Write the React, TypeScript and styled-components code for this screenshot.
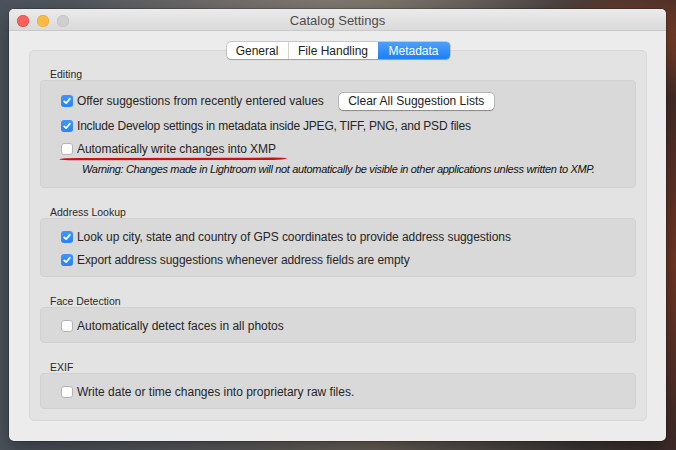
import React from "react";
import styled, { createGlobalStyle } from "styled-components";

const Global = createGlobalStyle`
  html, body { margin: 0; padding: 0; }
  body {
    width: 676px;
    height: 450px;
    overflow: hidden;
    font-family: "Liberation Sans", Arial, sans-serif;
    background:
      radial-gradient(ellipse 120px 60px at 640px 40px, rgba(150,70,40,0.85), transparent),
      radial-gradient(ellipse 60px 200px at 676px 260px, rgba(120,55,35,0.9), transparent),
      radial-gradient(ellipse 260px 40px at 330px 0px, rgba(140,130,120,0.7), transparent),
      linear-gradient(90deg, #4a525c 0%, #5a5b5e 30%, #6a625a 55%, #3f3a3a 85%, #3a2a28 100%);
  }
  #root { padding: 9px 10px 9px 9px; }
`;

const Window = styled.div`
  width: 657px;
  height: 432px;
  background: #ececec;
  border-radius: 5px;
  box-shadow: 0 0 0 0.5px rgba(0,0,0,0.35), 0 8px 20px rgba(0,0,0,0.35);
  display: flex;
  flex-direction: column;
  overflow: hidden;
`;

const TitleBar = styled.div`
  height: 19px;
  padding-top: 2px;
  flex: none;
  border-bottom: 1px solid #c9c9c9;
  background: linear-gradient(#ebebeb, #dadada);
  display: flex;
  align-items: center;
  position: relative;
  padding-left: 8px;
  gap: 8px;
`;

const Light = styled.span<{ $c: string; $b: string }>`
  width: 12px;
  height: 12px;
  border-radius: 50%;
  background: ${(p) => p.$c};
  box-shadow: inset 0 0 0 0.5px ${(p) => p.$b};
`;

const Title = styled.div`
  position: absolute;
  left: 0;
  right: 0;
  top: 2px;
  bottom: 0;
  display: flex;
  align-items: center;
  justify-content: center;
  font-size: 13px;
  color: #4d4d4d;
  pointer-events: none;
`;

const Content = styled.div`
  flex: 1;
  display: flex;
  flex-direction: column;
  padding: 11px 19px 20px 20px;
`;

const Segmented = styled.div`
  align-self: center;
  display: flex;
  height: 17px;
  margin-bottom: -9px;
  position: relative;
  z-index: 1;
  background: #fff;
  border-radius: 4px;
  box-shadow: 0 0 0 0.5px rgba(0,0,0,0.28), 0 0.5px 1px rgba(0,0,0,0.2);
`;

const Segment = styled.div<{ $w: number; $active?: boolean }>`
  width: ${(p) => p.$w}px;
  display: flex;
  align-items: center;
  justify-content: center;
  font-size: 12px;
  color: ${(p) => (p.$active ? "#fff" : "#222")};
  background: ${(p) => (p.$active ? "linear-gradient(#4da0fd, #1b7ff6)" : "transparent")};
  border-left: ${(p) => (p.$active ? "none" : "1px solid #d4d4d4")};
  &:first-child { border-left: none; border-radius: 4px 0 0 4px; }
  &:last-child { border-radius: 0 4px 4px 0; }
`;

const TabBox = styled.div`
  flex: 1;
  background: #e3e3e3;
  border: 1px solid #d8d8d8;
  border-radius: 5px;
  padding: 17px 10px 11px 10px;
  display: flex;
  flex-direction: column;
  gap: 18px;
`;

const Section = styled.div`
  display: flex;
  flex-direction: column;
`;

const SectionLabel = styled.div`
  font-size: 10.5px;
  line-height: 12px;
  height: 12px;
  color: #2a2a2a;
  padding-left: 10px;
`;

const Group = styled.div`
  background: #d9d9d9;
  border: 1px solid #d1d1d1;
  border-radius: 4px;
  padding: 8px 20px 6px 20px;
  display: flex;
  flex-direction: column;
  gap: 3px;
`;

const Row = styled.div<{ $h?: number }>`
  height: ${(p) => p.$h ?? 20}px;
  display: flex;
  align-items: center;
  position: relative;
`;

const Box = styled.span<{ $on?: boolean }>`
  width: 12px;
  height: 12px;
  flex: none;
  border-radius: 3px;
  box-sizing: border-box;
  background: ${(p) => (p.$on ? "linear-gradient(#3f95fb, #2a84f7)" : "#fff")};
  border: ${(p) => (p.$on ? "none" : "1px solid #b4b4b4")};
  display: flex;
  align-items: center;
  justify-content: center;
  margin-right: 4px;
`;

const Label = styled.span<{ $ls?: number }>`
  font-size: 12px;
  color: #262626;
  white-space: nowrap;
  letter-spacing: ${(p) => p.$ls ?? 0}px;
`;

const Button = styled.button`
  margin-left: 15px;
  width: 155px;
  height: 17px;
  padding: 0;
  background: #fff;
  border: none;
  border-radius: 4px;
  box-shadow: 0 0 0 0.5px rgba(0,0,0,0.3), 0 0.5px 1px rgba(0,0,0,0.25);
  font-family: "Liberation Sans", Arial, sans-serif;
  font-size: 12px;
  color: #222;
`;

const Warning = styled.div`
  height: 14px;
  line-height: 14px;
  padding-left: 21px;
  margin-bottom: 5px;
  font-style: italic;
  font-size: 11px;
  letter-spacing: -0.33px;
  color: #111;
  white-space: nowrap;
`;

const Underline = styled.svg`
  position: absolute;
  left: -3px;
  bottom: -2px;
`;

const Check = () => (
  <svg width="10" height="10" viewBox="0 0 10 10">
    <path d="M2.2 5.3 L4.1 7.2 L7.9 2.6" fill="none" stroke="#fff" strokeWidth="1.7" strokeLinecap="round" strokeLinejoin="round" />
  </svg>
);

const CheckRow: React.FC<{ on?: boolean; text: string; ls?: number; h?: number; children?: React.ReactNode }> = ({ on, text, ls, h, children }) => (
  <Row $h={h}>
    <Box $on={on}>{on && <Check />}</Box>
    <Label $ls={ls}>{text}</Label>
    {children}
  </Row>
);

export default function App() {
  return (
    <>
      <Global />
      <Window>
        <TitleBar>
          <Light $c="#fc605c" $b="#de4a45" />
          <Light $c="#fdbc40" $b="#dea034" />
          <Light $c="#cfcfcf" $b="#bdbdbd" />
          <Title>Catalog Settings</Title>
        </TitleBar>
        <Content>
          <Segmented>
            <Segment $w={61}>General</Segment>
            <Segment $w={89}>File Handling</Segment>
            <Segment $w={72} $active>Metadata</Segment>
          </Segmented>
          <TabBox>
            <Section>
              <SectionLabel>Editing</SectionLabel>
              <Group>
                <CheckRow on h={24} text="Offer suggestions from recently entered values" ls={-0.04}>
                  <Button>Clear All Suggestion Lists</Button>
                </CheckRow>
                <CheckRow on ls={-0.2} text="Include Develop settings in metadata inside JPEG, TIFF, PNG, and PSD files" />
                <Row>
                  <Box />
                  <Label $ls={-0.05}>Automatically write changes into XMP</Label>
                  <Underline width="230" height="5" viewBox="0 0 230 5">
                    <path d="M1 3.2 Q 4 2 20 2 L 215 1.6 Q 226 1.6 229 2.6 Q 226 3.8 215 3.9 L 20 4.2 Q 4 4.3 1 3.2 Z" fill="#cc1016" />
                  </Underline>
                </Row>
                <Warning>Warning: Changes made in Lightroom will not automatically be visible in other applications unless written to XMP.</Warning>
              </Group>
            </Section>
            <Section>
              <SectionLabel>Address Lookup</SectionLabel>
              <Group>
                <CheckRow on ls={-0.06} text="Look up city, state and country of GPS coordinates to provide address suggestions" />
                <CheckRow on ls={-0.08} text="Export address suggestions whenever address fields are empty" />
              </Group>
            </Section>
            <Section>
              <SectionLabel>Face Detection</SectionLabel>
              <Group>
                <CheckRow ls={0.0} text="Automatically detect faces in all photos" />
              </Group>
            </Section>
            <Section>
              <SectionLabel>EXIF</SectionLabel>
              <Group>
                <CheckRow ls={0.0} text="Write date or time changes into proprietary raw files." />
              </Group>
            </Section>
          </TabBox>
        </Content>
      </Window>
    </>
  );
}
